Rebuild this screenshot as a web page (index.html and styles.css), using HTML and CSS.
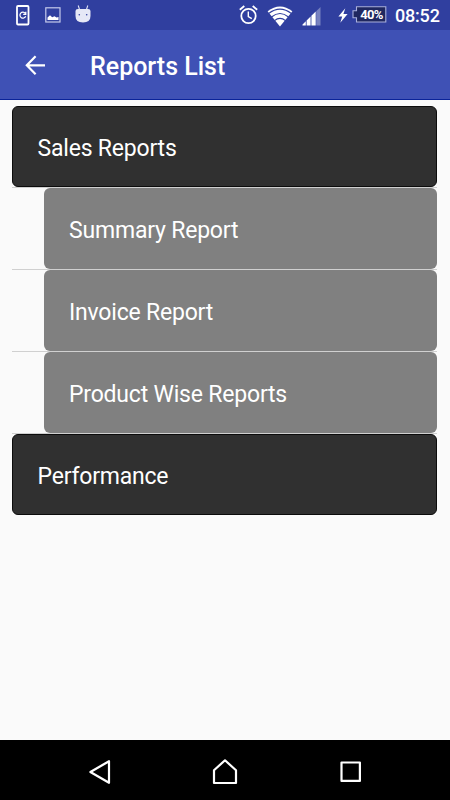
FILE: index.html
```html
<!DOCTYPE html>
<html lang="en">

<head>
  <meta charset="UTF-8">
  <title>Reports List</title>
  <link rel="stylesheet" href="styles.css">
</head>

<body>
  <div class="screen">

    <div class="status-bar">
      <div class="notifications">
        <svg width="14" height="21" viewBox="0 0 14 21" fill="none" stroke="#fff">
          <rect x="1" y="1" width="11.5" height="18.5" rx="1" stroke-width="1.8" />
          <path d="M9.3 8.3A3 3 0 1 0 9.7 11.3M9.8 6.8v2.6H7.2" stroke-width="1.2" />
        </svg>
        <svg width="16" height="16" viewBox="0 0 16 16">
          <rect x="0.8" y="0.8" width="14.2" height="14.2" fill="none" stroke="#c5caec" stroke-width="1.2" />
          <path d="M2.5 13V10.5L5 8.2 7.2 10.3 9.5 9.3 11.5 10.6 13.5 10V13z" fill="#fff" />
        </svg>
        <svg width="16" height="18" viewBox="0 0 16 18">
          <path d="M3.2 0.5L4.7 5M12.8 0.5L11.3 5" stroke="#dfe2f4" stroke-width="1.1" />
          <path d="M0.5 6Q0.5 4 3 4H13Q15.5 4 15.5 6V11Q15.5 17.5 8 17.5T0.5 11z" fill="#e6e8f6" />
          <circle cx="4.3" cy="9.7" r="0.8" fill="#303f9f" />
          <circle cx="11.7" cy="9.7" r="0.8" fill="#303f9f" />
        </svg>
      </div>
      <div class="system">
        <svg class="alarm" width="19" height="20" viewBox="0 0 19 20" fill="none" stroke="#fff">
          <circle cx="9.5" cy="11" r="7.2" stroke-width="1.8" />
          <path d="M9.3 6.5v5l3.5 2.2" stroke-width="1.4" />
          <path d="M0.8 4.8L5.3 1M18.2 4.8L13.7 1" stroke-width="1.8" />
        </svg>
        <svg class="wifi" width="26" height="21" viewBox="0 0 26 21">
          <path d="M13 20.5L0.6 5.3Q13 -4.3 25.4 5.3z" fill="#fff" />
          <path d="M1.5 7.6Q13 -1.4 24.5 7.6M4.5 11Q13 4 21.5 11M7.5 14.6Q13 10 18.5 14.6" fill="none" stroke="#303f9f" stroke-width="1.2" />
        </svg>
        <svg class="signal" width="19" height="19" viewBox="0 0 19 19">
          <path d="M0.5 18.5V17.5L3.8 14.2V18.5zM4.6 18.5V13.4L8.6 9.5V18.5zM9.4 18.5V8.7L13.7 4.6V18.5z" fill="#fff" />
          <path d="M14.2 18.5V4.2L18.5 0V18.5z" fill="#7781c0" />
        </svg>
        <svg class="bolt" width="10" height="15" viewBox="0 0 10 15">
          <path d="M7.3 0.3L0.4 8.6H4.2L2.3 14.7L9.6 6H5.4z" fill="#fff" />
        </svg>
        <div class="battery">
          <svg width="35" height="17" viewBox="0 0 35 17">
            <path d="M4.5 0.7H33.8V16H4.5V11.8H1V4.8H4.5z" fill="#20285f" stroke="#a9b0dc" stroke-width="1.1" />
          </svg>
          <span class="percent">40%</span>
        </div>
        <span class="clock">08:52</span>
      </div>
    </div>

    <div class="toolbar">
      <svg width="21" height="21" viewBox="0 0 21 21" fill="none" stroke="#fff" stroke-width="2.2">
        <path d="M20 10.3H2M10.6 1.3L1.8 10.3L10.6 19.3" />
      </svg>
      <h1>Reports List</h1>
    </div>

    <div class="list">
      <div class="row"><div class="group">Sales Reports</div></div>
      <div class="row"><div class="child">Summary Report</div></div>
      <div class="row"><div class="child">Invoice Report</div></div>
      <div class="row"><div class="child">Product Wise Reports</div></div>
      <div class="row"><div class="group">Performance</div></div>
    </div>

    <div class="nav-bar">
      <svg width="22" height="26" viewBox="0 0 22 26">
        <path d="M20 2.2V23.8L1.4 13z" />
      </svg>
      <svg class="home" width="26" height="26" viewBox="0 0 26 26">
        <path d="M13 1.3L24 11.2V24H2V11.2z" />
      </svg>
      <svg width="22" height="22" viewBox="0 0 22 22">
        <rect x="1.5" y="1.5" width="18.4" height="18.4" />
      </svg>
    </div>

  </div>
</body>

</html>
```

FILE: styles.css
```css
body {
  margin: 0;
  font-family: Roboto, sans-serif;
  background: #fafafa;
}

svg {
  display: block;
  flex: none;
}

.screen {
  display: flex;
  flex-direction: column;
  width: 450px;
  height: 800px;
}

.status-bar {
  display: flex;
  justify-content: space-between;
  height: 30px;
  background: #303f9f;
  color: #fff;
}

.notifications {
  display: flex;
  align-items: center;
  gap: 14.5px;
  padding-left: 16px;
}

.notifications svg:last-child {
  margin-bottom: 2px;
}

.system {
  display: flex;
  align-items: center;
  padding-right: 9px;
}

.wifi {
  margin: 2px 0 0 9px;
}

.signal {
  margin: 2px 0 0 9px;
}

.bolt {
  margin-left: 17px;
}

.battery {
  position: relative;
  margin: 0 8px 1px 4px;
}

.percent {
  position: absolute;
  top: 0;
  left: 5px;
  width: 29px;
  line-height: 17px;
  text-align: center;
  font-size: 13px;
  font-weight: bold;
  letter-spacing: -0.6px;
}

.clock {
  width: 46px;
  font-size: 18px;
  font-weight: 500;
  line-height: 32px;
  padding-top: 2px;
  letter-spacing: -0.2px;
  white-space: nowrap;
}

.toolbar {
  display: flex;
  align-items: center;
  gap: 44px;
  height: 69px;
  padding-left: 25px;
  background: #3f51b5;
  border-bottom: 1px solid #0a2399;
}

.toolbar svg {
  margin-top: 2px;
}

h1 {
  margin: 4px 0 0;
  color: #fff;
  font-size: 25px;
  font-weight: 500;
}

.list {
  flex: 1;
  padding: 6px 13px 0 12px;
}

.row {
  box-sizing: border-box;
  height: 82px;
  border-bottom: 1px solid #d0d0d0;
}

.row:last-child {
  border-bottom: none;
}

.group,
.child {
  box-sizing: border-box;
  height: 81px;
  padding-left: 25px;
  border-radius: 6px;
  color: #fff;
  font-size: 23px;
  letter-spacing: -0.2px;
  line-height: 85px;
}

.group {
  background: #303030;
  border: 1px solid #0c0c0c;
  padding-left: 24.5px;
  line-height: 83px;
}

.child {
  margin-left: 32px;
  background: #808080;
}

.nav-bar {
  display: flex;
  align-items: center;
  justify-content: space-between;
  height: 60px;
  padding: 3px 88px 0 89px;
  box-sizing: border-box;
  background: #000;
}

.nav-bar svg {
  fill: none;
  stroke: #fff;
  stroke-width: 2.2;
  stroke-linejoin: round;
}

.nav-bar .home {
  margin-right: 1px;
}
```
